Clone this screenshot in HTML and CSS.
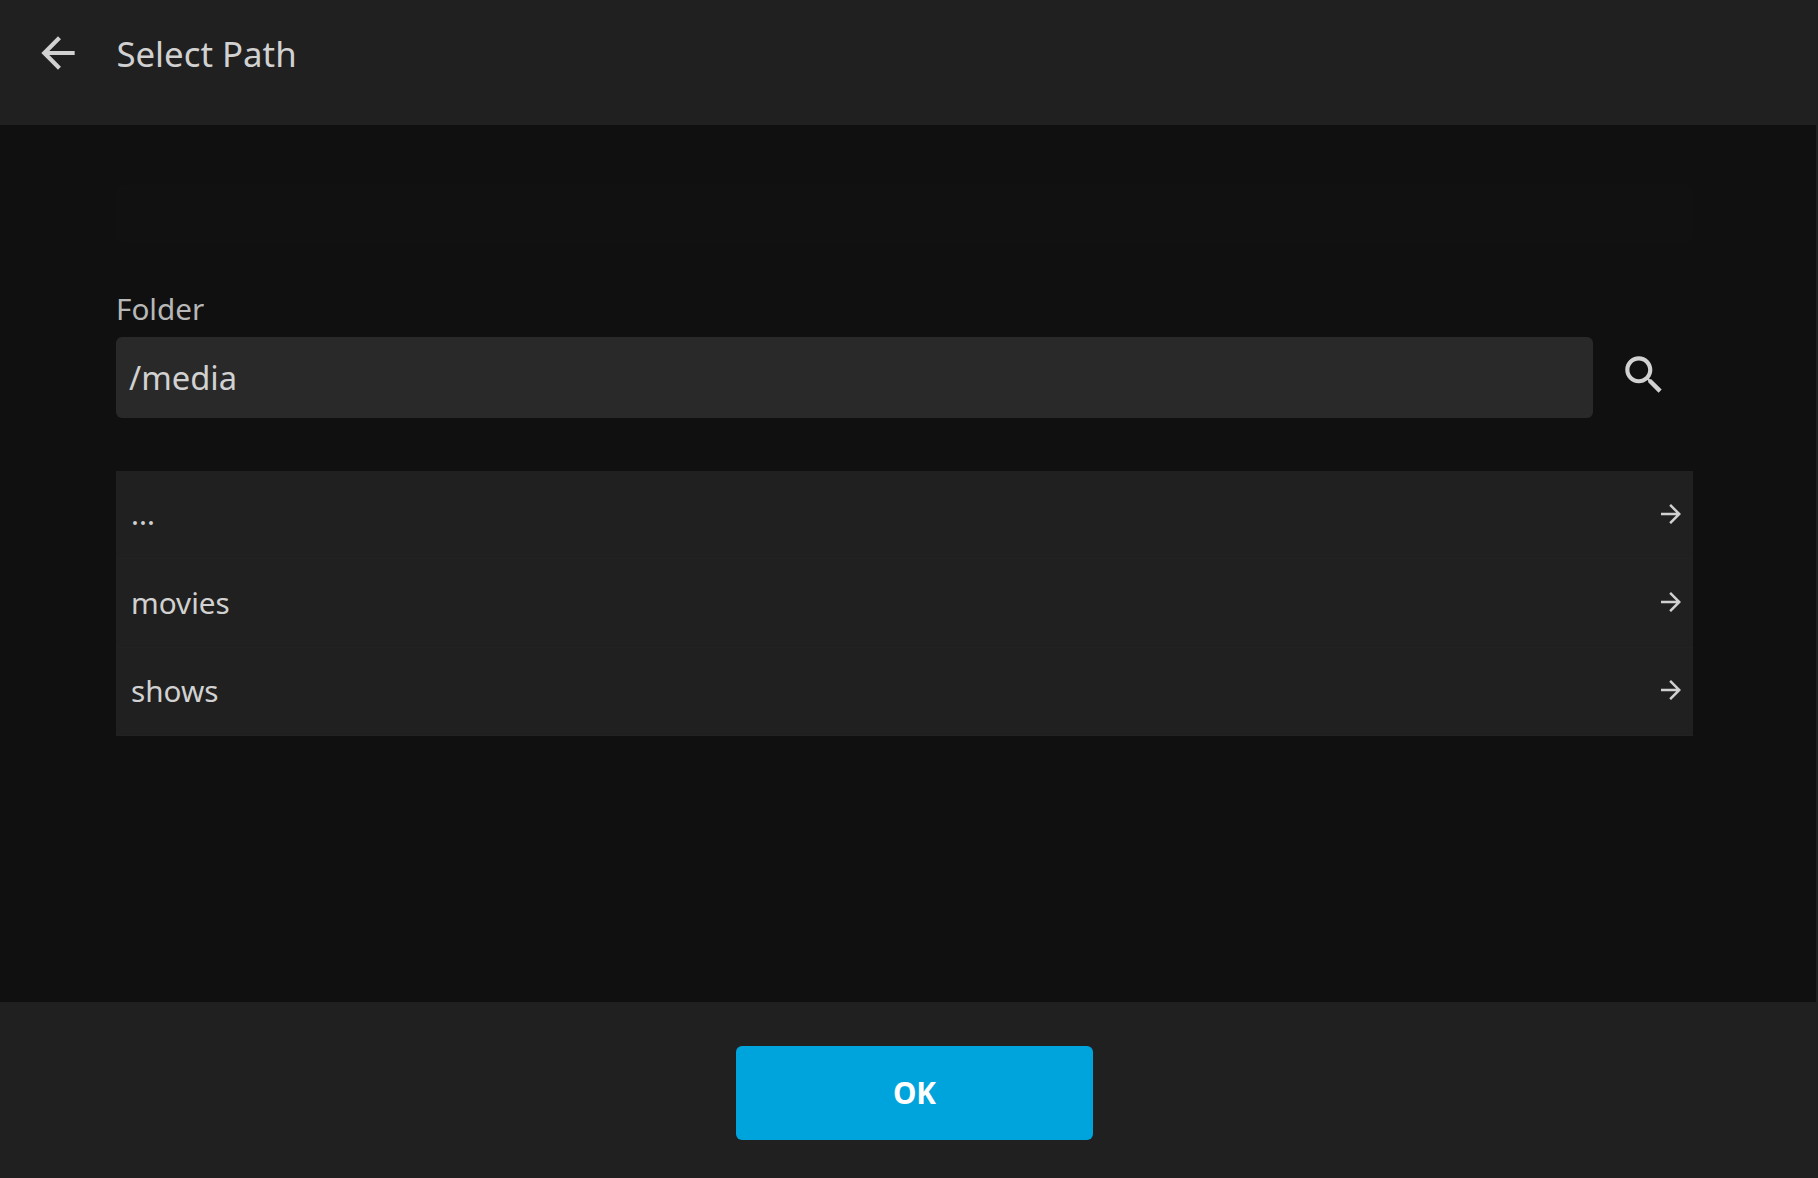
FILE: index.html
```html
<!DOCTYPE html>
<html lang="en">
<head>
    <meta charset="UTF-8">
    <meta name="viewport" content="width=device-width, initial-scale=1.0">
    <title>Select Path</title>
    <link rel="stylesheet" href="styles.css">
</head>
<body>
    <div class="dialog">
        <header class="dialog-header">
            <button type="button" class="icon-btn" aria-label="Back">
                <svg viewBox="0 0 24 24"><path d="M20 11H7.83l5.59-5.59L12 4l-8 8 8 8 1.41-1.41L7.83 13H20v-2z"/></svg>
            </button>
            <h1>Select Path</h1>
        </header>

        <main class="dialog-content">
            <div class="info-banner"></div>

            <form id="pathForm">
                <label for="folder">Folder</label>
                <div class="input-row">
                    <input type="text" id="folder" value="/media">
                    <button type="button" class="icon-btn" aria-label="Refresh">
                        <svg viewBox="0 0 24 24"><path d="M15.5 14h-.79l-.28-.27C15.41 12.59 16 11.11 16 9.5 16 5.91 13.09 3 9.5 3S3 5.91 3 9.5 5.91 16 9.5 16c1.61 0 3.09-.59 4.23-1.57l.27.28v.79l5 4.99L20.49 19l-4.99-5zm-6 0C7.01 14 5 11.99 5 9.5S7.01 5 9.5 5 14 7.01 14 9.5 11.99 14 9.5 14z"/></svg>
                    </button>
                </div>
            </form>

            <div class="folder-list">
                <div class="folder-item">
                    <span>...</span>
                    <svg viewBox="0 0 24 24"><path d="M12 4l-1.41 1.41L16.17 11H4v2h12.17l-5.58 5.59L12 20l8-8z"/></svg>
                </div>
                <div class="folder-item">
                    <span>movies</span>
                    <svg viewBox="0 0 24 24"><path d="M12 4l-1.41 1.41L16.17 11H4v2h12.17l-5.58 5.59L12 20l8-8z"/></svg>
                </div>
                <div class="folder-item">
                    <span>shows</span>
                    <svg viewBox="0 0 24 24"><path d="M12 4l-1.41 1.41L16.17 11H4v2h12.17l-5.58 5.59L12 20l8-8z"/></svg>
                </div>
            </div>
        </main>

        <footer class="dialog-footer">
            <button type="submit" form="pathForm" class="ok-btn">OK</button>
        </footer>
    </div>
</body>
</html>
```

FILE: styles.css
```css
* {
    margin: 0;
    padding: 0;
    box-sizing: border-box;
    font-family: "Noto Sans", sans-serif;
}

body {
    background: #202020;
    color: #d1d1d1;
}

.dialog {
    display: flex;
    flex-direction: column;
    height: 100vh;
}

.dialog-header {
    display: flex;
    align-items: center;
    height: 125px;
    padding: 0 33px 19px;
    background: #202020;
}

.dialog-header h1 {
    margin-left: 33.4px;
    font-size: 34.8px;
    font-weight: 400;
}

.icon-btn {
    width: 50px;
    height: 50px;
    background: none;
    border: none;
    color: #d1d1d1;
    cursor: pointer;
}

svg {
    display: block;
    fill: currentColor;
}

.icon-btn svg {
    width: 50px;
    height: 50px;
}

.dialog-content {
    flex: 1;
    margin-right: 2px;
    padding: 60px 123px 0 116px;
    background: #101010;
}

.info-banner {
    height: 58px;
    margin-bottom: 46px;
    background: #111;
    border-radius: 6px;
}

label {
    display: block;
    margin-bottom: 8px;
    line-height: 40px;
    font-size: 29.7px;
    color: #b7b7b7;
}

.input-row {
    display: flex;
    align-items: center;
    gap: 25.5px;
    padding-right: 24.5px;
}

.input-row input {
    flex: 1;
    height: 81px;
    padding: 0 13px;
    background: #292929;
    border: none;
    border-radius: 6px;
    color: #d1d1d1;
    font-size: 32.7px;
}

.input-row input:focus {
    outline: 2px solid #00a4dc;
}

.input-row .icon-btn {
    margin-bottom: 5px;
}

.folder-list {
    margin-top: 53px;
}

.folder-item {
    display: flex;
    justify-content: space-between;
    align-items: center;
    height: 88.4px;
    padding: 0 7px 2px 15px;
    background: #202020;
    border-bottom: 1px solid #222;
    font-size: 29.7px;
    cursor: pointer;
}

.folder-item svg {
    width: 30px;
    height: 30px;
}

.dialog-footer {
    display: flex;
    justify-content: center;
    align-items: center;
    height: 176px;
    padding: 0 0 2px 11px;
    background: #202020;
}

.ok-btn {
    width: 357px;
    height: 94px;
    margin-top: 8px;
    padding-bottom: 2px;
    background: #00a4dc;
    border: none;
    border-radius: 6px;
    color: #fff;
    font-size: 29.7px;
    font-weight: 700;
    cursor: pointer;
}
```
